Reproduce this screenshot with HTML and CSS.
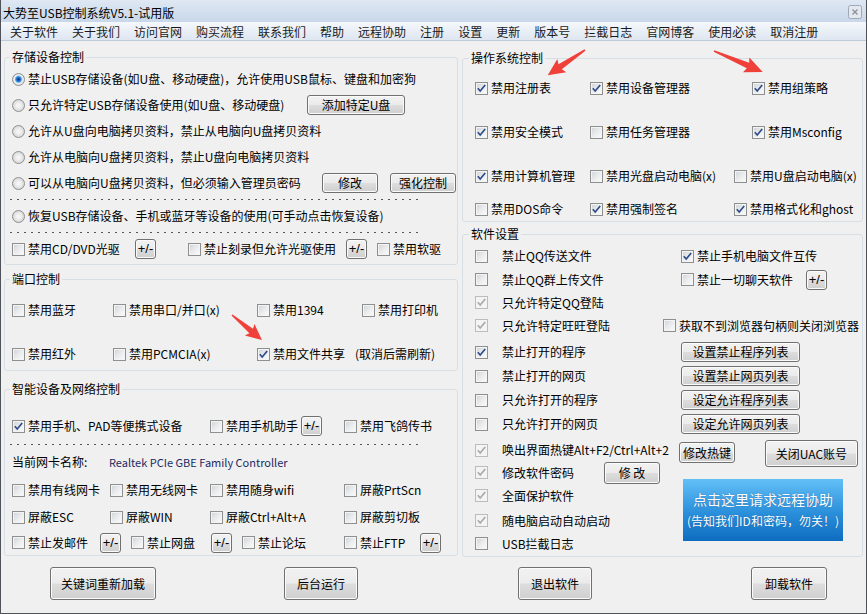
FILE: index.html
```html
<!DOCTYPE html>
<html lang="zh-CN">
<head>
  <meta charset="UTF-8" />
  <title>大势至USB控制系统V5.1-试用版</title>
  <link rel="stylesheet" href="styles.css">
</head>
<body>

<svg class="defs" width="0" height="0">
  <symbol id="chk" viewBox="0 0 11 11"><path d="M1.8 5.3 L4.2 8 L9.2 2"/></symbol>
</svg>

<div class="window">
  <div class="titlebar">
    <span class="title">大势至USB控制系统V5.1-试用版</span>
    <span class="close">
      <svg width="14" height="14" viewBox="0 0 14 14">
        <rect x="0.5" y="0.5" width="13" height="13" rx="2" fill="#e4e9f0" stroke="#9ea8b6"/>
        <path d="M4.5 4.5 L9.5 9.5 M9.5 4.5 L4.5 9.5" stroke="#8d939b" stroke-width="1.4"/>
      </svg>
    </span>
  </div>

  <div class="menubar">
    <span class="menu">关于软件</span>
    <span class="menu">关于我们</span>
    <span class="menu">访问官网</span>
    <span class="menu">购买流程</span>
    <span class="menu">联系我们</span>
    <span class="menu">帮助</span>
    <span class="menu">远程协助</span>
    <span class="menu">注册</span>
    <span class="menu">设置</span>
    <span class="menu">更新</span>
    <span class="menu">版本号</span>
    <span class="menu">拦截日志</span>
    <span class="menu">官网博客</span>
    <span class="menu">使用必读</span>
    <span class="menu">取消注册</span>
  </div>

  <div class="main">
    <div class="col col-left">

      <fieldset class="group g-storage">
        <legend>存储设备控制</legend>
        <div class="row h26"><span class="radio on"></span>禁止USB存储设备(如U盘、移动硬盘)，允许使用USB鼠标、键盘和加密狗</div>
        <div class="row h26"><span class="radio"></span><span class="w279">只允许特定USB存储设备使用(如U盘、移动硬盘)</span><button class="btn b-add">添加特定U盘</button></div>
        <div class="row h26"><span class="radio"></span>允许从U盘向电脑拷贝资料，禁止从电脑向U盘拷贝资料</div>
        <div class="row h26"><span class="radio"></span>允许从电脑向U盘拷贝资料，禁止U盘向电脑拷贝资料</div>
        <div class="row h26"><span class="radio"></span><span class="w294">可以从电脑向U盘拷贝资料，但必须输入管理员密码</span><button class="btn b-mod">修改</button><button class="btn b-strong">强化控制</button></div>
        <div class="dash"></div>
        <div class="row h26"><span class="radio"></span>恢复USB存储设备、手机或蓝牙等设备的使用(可手动点击恢复设备)</div>
        <div class="dash"></div>
        <div class="row h26">
          <span class="item w123"><span class="cb"></span>禁用CD/DVD光驱</span>
          <button class="btn pm">+/-</button>
          <span class="item w158 ml32"><span class="cb"></span>禁止刻录但允许光驱使用</span>
          <button class="btn pm">+/-</button>
          <span class="item ml10"><span class="cb"></span>禁用软驱</span>
        </div>
      </fieldset>

      <fieldset class="group g-port">
        <legend>端口控制</legend>
        <div class="row h26">
          <span class="item w101"><span class="cb"></span>禁用蓝牙</span>
          <span class="item w144"><span class="cb"></span>禁用串口/并口(x)</span>
          <span class="item w105"><span class="cb"></span>禁用1394</span>
          <span class="item"><span class="cb"></span>禁用打印机</span>
        </div>
        <div class="row h26 mt18">
          <span class="item w101"><span class="cb"></span>禁用红外</span>
          <span class="item w144"><span class="cb"></span>禁用PCMCIA(x)</span>
          <span class="item w98"><span class="cb"><svg class="tick"><use href="#chk"/></svg></span>禁用文件共享</span>
          <span>(取消后需刷新)</span>
        </div>
      </fieldset>

      <fieldset class="group g-smart">
        <legend>智能设备及网络控制</legend>
        <div class="row h26">
          <span class="item w198"><span class="cb"><svg class="tick"><use href="#chk"/></svg></span>禁用手机、PAD等便携式设备</span>
          <span class="item w91"><span class="cb"></span>禁用手机助手</span>
          <button class="btn pm">+/-</button>
          <span class="item ml22"><span class="cb"></span>禁用飞鸽传书</span>
        </div>
        <div class="dash dash-net"></div>
        <div class="row h25">
          <span class="w97">当前网卡名称:</span>
          <span class="nic">Realtek PCIe GBE Family Controller</span>
        </div>
        <div class="row h28 mt2">
          <span class="item w98"><span class="cb"></span>禁用有线网卡</span>
          <span class="item w100"><span class="cb"></span>禁用无线网卡</span>
          <span class="item w134"><span class="cb"></span>禁用随身wifi</span>
          <span class="item"><span class="cb"></span>屏蔽PrtScn</span>
        </div>
        <div class="row h26">
          <span class="item w98"><span class="cb"></span>屏蔽ESC</span>
          <span class="item w100"><span class="cb"></span>屏蔽WIN</span>
          <span class="item w134"><span class="cb"></span>屏蔽Ctrl+Alt+A</span>
          <span class="item"><span class="cb"></span>屏蔽剪切板</span>
        </div>
        <div class="row h25">
          <span class="item w88"><span class="cb"></span>禁止发邮件</span>
          <button class="btn pm">+/-</button>
          <span class="item w80 ml10"><span class="cb"></span>禁止网盘</span>
          <button class="btn pm">+/-</button>
          <span class="item w102 ml10"><span class="cb"></span>禁止论坛</span>
          <span class="item w76"><span class="cb"></span>禁止FTP</span>
          <button class="btn pm">+/-</button>
        </div>
      </fieldset>
    </div>

    <div class="col col-right">
      <fieldset class="group g-os">
        <legend>操作系统控制</legend>
        <div class="row h26">
          <span class="item w115"><span class="cb"><svg class="tick"><use href="#chk"/></svg></span>禁用注册表</span>
          <span class="item w162"><span class="cb"><svg class="tick"><use href="#chk"/></svg></span>禁用设备管理器</span>
          <span class="item"><span class="cb"><svg class="tick"><use href="#chk"/></svg></span>禁用组策略</span>
        </div>
        <div class="row h26 mt18">
          <span class="item w115"><span class="cb"><svg class="tick"><use href="#chk"/></svg></span>禁用安全模式</span>
          <span class="item w162"><span class="cb"></span>禁用任务管理器</span>
          <span class="item"><span class="cb"><svg class="tick"><use href="#chk"/></svg></span>禁用Msconfig</span>
        </div>
        <div class="row h26 mt18">
          <span class="item w115"><span class="cb"><svg class="tick"><use href="#chk"/></svg></span>禁用计算机管理</span>
          <span class="item w144"><span class="cb"></span>禁用光盘启动电脑(x)</span>
          <span class="item"><span class="cb"></span>禁用U盘启动电脑(x)</span>
        </div>
        <div class="row h22 mt9">
          <span class="item w115"><span class="cb"></span>禁用DOS命令</span>
          <span class="item w144"><span class="cb"><svg class="tick"><use href="#chk"/></svg></span>禁用强制签名</span>
          <span class="item"><span class="cb"><svg class="tick"><use href="#chk"/></svg></span>禁用格式化和ghost</span>
        </div>
      </fieldset>

      <fieldset class="group g-soft">
        <legend>软件设置</legend>
        <div class="row h24"><span class="cb"></span><span class="stext w179">禁止QQ传送文件</span><span class="cb"><svg class="tick"><use href="#chk"/></svg></span>禁止手机电脑文件互传</div>
        <div class="row h23"><span class="cb"></span><span class="stext w179">禁止QQ群上传文件</span><span class="cb"></span><span class="w109">禁止一切聊天软件</span><button class="btn pm">+/-</button></div>
        <div class="row h23"><span class="cb dis"><svg class="tick"><use href="#chk"/></svg></span><span class="stext">只允许特定QQ登陆</span></div>
        <div class="row h23"><span class="cb dis"><svg class="tick"><use href="#chk"/></svg></span><span class="stext w161">只允许特定旺旺登陆</span><span class="cb"></span>获取不到浏览器句柄则关闭浏览器</div>
        <div class="row h24 mt3"><span class="cb"><svg class="tick"><use href="#chk"/></svg></span><span class="stext w179">禁止打开的程序</span><button class="btn list">设置禁止程序列表</button></div>
        <div class="row h24"><span class="cb"></span><span class="stext w179">禁止打开的网页</span><button class="btn list">设置禁止网页列表</button></div>
        <div class="row h24"><span class="cb"></span><span class="stext w179">只允许打开的程序</span><button class="btn list">设定允许程序列表</button></div>
        <div class="row h24"><span class="cb"></span><span class="stext w179">只允许打开的网页</span><button class="btn list">设定允许网页列表</button></div>

        <div class="lower">
          <div class="lower-left">
            <div class="row h22 mt3"><span class="cb dis"><svg class="tick"><use href="#chk"/></svg></span><span class="stext">唤出界面热键Alt+F2/Ctrl+Alt+2</span></div>
            <div class="row h23"><span class="cb dis"><svg class="tick"><use href="#chk"/></svg></span><span class="stext w102">修改软件密码</span><button class="btn b-pwd">修 改</button></div>
            <div class="row h23"><span class="cb dis"><svg class="tick"><use href="#chk"/></svg></span><span class="stext">全面保护软件</span></div>
            <div class="row h27"><span class="cb dis"><svg class="tick"><use href="#chk"/></svg></span><span class="stext">随电脑启动自动启动</span></div>
            <div class="row h19"><span class="cb"></span><span class="stext">USB拦截日志</span></div>
          </div>
          <div class="lower-right">
            <div class="hotrow">
              <button class="btn b-hot">修改热键</button>
              <button class="btn b-uac">关闭UAC账号</button>
            </div>
            <button class="remote">
              <span class="remote-1">点击这里请求远程协助</span>
              <span class="remote-2">(告知我们ID和密码，勿关！)</span>
            </button>
          </div>
        </div>
      </fieldset>
    </div>
  </div>

  <div class="footer">
    <button class="btn fbtn f1">关键词重新加载</button>
    <button class="btn fbtn f2">后台运行</button>
    <button class="btn fbtn f3">退出软件</button>
    <button class="btn fbtn f4">卸载软件</button>
  </div>

  <!-- red annotation arrows -->
  <svg class="marks" width="867" height="614" viewBox="0 0 867 614">
    <path transform="translate(232,315) rotate(39.8)" d="M0 -0.8 L25 -2.8 L23 -7.5 L39 0 L23 7.5 L25 2.8 L0 0.8 Z"/>
    <path transform="translate(585,50) rotate(145.9)" d="M0 -0.8 L30 -3 L28 -8 L45 0 L28 8 L30 3 L0 0.8 Z"/>
    <path transform="translate(714,51) rotate(23.2)" d="M0 -0.8 L37 -3 L35 -8 L53 0 L35 8 L37 3 L0 0.8 Z"/>
  </svg>
</div>

</body>
</html>
```

FILE: styles.css
```css
* {
  box-sizing: border-box;
}
body {
  margin: 0;
  font: 12px/16px "Noto Sans CJK SC", sans-serif;
  color: #000;
  background: #f0f0f0;
}
.defs {
  position: absolute;
}
.window {
  position: relative;
  width: 867px;
  height: 614px;
  border: 1px solid #4f5359;
  border-top: none;
  background: #f0f0f0;
  display: flex;
  flex-direction: column;
}

/* title + menu */
.titlebar {
  height: 22px;
  display: flex;
  padding: 5px 4px 0 2px;
  background: linear-gradient(#dfe8f3, #c8d7ea);
}
.close {
  margin-left: auto;
  height: 14px;
}
.close svg {
  display: block;
}
.menubar {
  height: 19px;
  display: flex;
  padding: 2px 0 0 2px;
  background: linear-gradient(#f5f8fc, #dee6f1);
  border-bottom: 1px solid #bccada;
}
.menu {
  padding: 0 7px;
  color: #1a1a1a;
}

/* columns */
.main {
  display: flex;
  gap: 4px;
  padding: 9px 3px 0;
}
.col {
  display: flex;
  flex-direction: column;
}
.col-left {
  width: 454px;
}
.col-right {
  width: 401px;
}

.group {
  margin: 0;
  min-width: 0;
  border: 1px solid #d5dfe5;
  border-radius: 3px;
}
.group legend {
  padding: 0 2px;
  margin-left: -2px;
  line-height: 14px;
}
.g-storage { padding: 2px 0 2px 7px; }
.g-port { padding: 11px 0 3px 7px; margin-top: 7px; }
.g-smart { padding: 17px 0 0 7px; margin-top: 11px; }
.g-os { padding: 10px 0 1px 12px; margin-top: 1px; }
.g-soft { padding: 3px 0 3px 12px; margin-top: 5px; }
.g-os legend, .g-soft legend {
  margin-left: -6px;
}

.row {
  display: flex;
  align-items: center;
  white-space: nowrap;
}
.item {
  display: flex;
  align-items: center;
  flex: none;
}
.h19 { height: 19px; }
.h22 { height: 22px; }
.h23 { height: 23px; }
.h24 { height: 24px; }
.h25 { height: 25px; }
.h26 { height: 26px; }
.h27 { height: 27px; }
.h28 { height: 28px; }
.mt2 { margin-top: 2px; }
.mt3 { margin-top: 3px; }
.mt9 { margin-top: 9px; }
.mt18 { margin-top: 18px; }
.ml10 { margin-left: 10px; }
.ml22 { margin-left: 22px; }
.ml32 { margin-left: 32px; }
.w76 { width: 76px; }
.w80 { width: 80px; }
.w88 { width: 88px; }
.w91 { width: 91px; }
.w97 { width: 97px; }
.w98 { width: 98px; }
.w100 { width: 100px; }
.w101 { width: 101px; }
.w102 { width: 102px; }
.w105 { width: 105px; }
.w109 { width: 109px; flex: none; }
.w115 { width: 115px; }
.w123 { width: 123px; }
.w134 { width: 134px; }
.w144 { width: 144px; }
.w158 { width: 158px; }
.w161 { width: 161px; }
.w162 { width: 162px; }
.w179 { width: 179px; }
.w198 { width: 198px; }
.w279 { width: 279px; flex: none; }
.w294 { width: 294px; flex: none; }

.dash {
  height: 1px;
  width: 412px;
  margin: 3px 0 3px -2px;
  background: repeating-linear-gradient(to right, #555 0 2px, transparent 2px 7px);
}
.dash-net {
  margin: 5px 0 4px -2px;
}
.nic {
  font-size: 11px;
  color: #1b2a62;
}

/* check boxes & radios */
.cb {
  width: 13px;
  height: 13px;
  flex: none;
  margin-right: 3px;
  border: 1px solid #8e8f8f;
  background: linear-gradient(135deg, #cfd2d6 0%, #e9ebed 50%, #fcfcfc 100%);
  box-shadow: inset 0 0 0 1px #f4f4f4;
}
.cb.dis {
  border-color: #bcbcbc;
  background: #f4f4f4;
}
.tick {
  display: block;
  width: 11px;
  height: 11px;
  fill: none;
  stroke: #2e4c8a;
  stroke-width: 1.7;
}
.cb.dis .tick {
  stroke: #a9a9a9;
}
.radio {
  width: 13px;
  height: 13px;
  flex: none;
  margin-right: 3px;
  border-radius: 50%;
  border: 1px solid #8e8f8f;
  background: radial-gradient(circle at 50% 50%, #f6f6f6 0, #f2f2f2 2px, #d6d6d6 6px);
}
.radio.on {
  background: radial-gradient(circle at 50% 48%, #0b2f6c 0, #1a63c0 1.6px, #3f8fe0 2.6px, #8cc6f2 3.4px, #f3f3f3 4.2px, #d6d6d6 6px);
}

.stext {
  margin-left: 11px;
  flex: none;
}

/* buttons */
.btn {
  font: 12px/16px "Noto Sans CJK SC", sans-serif;
  color: #000;
  padding: 0;
  height: 20px;
  flex: none;
  border: 1px solid #707070;
  border-radius: 3px;
  background: linear-gradient(#f2f2f2 0%, #ebebeb 48%, #dddddd 52%, #cfcfcf 100%);
  box-shadow: inset 0 0 0 1px #fbfbfb;
}
.pm {
  width: 21px;
  font: 13px/16px "Liberation Sans", sans-serif;
}
.b-add { width: 98px; height: 20px; }
.b-mod { width: 56px; }
.b-strong { width: 66px; margin-left: 12px; }
.list { width: 119px; }
.b-pwd { width: 56px; height: 22px; }
.b-hot { width: 56px; height: 21px; margin-top: 2px; }
.b-uac { width: 93px; height: 27px; margin-left: 30px; }

.lower {
  display: flex;
}
.lower-left {
  width: 204px;
  flex: none;
}
.lower-right {
  display: flex;
  flex-direction: column;
  align-items: flex-start;
}
.hotrow {
  display: flex;
  align-items: flex-start;
  margin-top: 4px;
  height: 27px;
}
.remote {
  margin: 12px 0 0 4px;
  width: 160px;
  height: 62px;
  padding: 0;
  border: none;
  color: #fff;
  font-family: "Noto Sans CJK SC", sans-serif;
  background: linear-gradient(#63bff6, #2a8fdb 55%, #0e6cbf);
  display: flex;
  flex-direction: column;
  align-items: center;
  justify-content: center;
  text-shadow: 0 0 1px rgba(0, 40, 90, 0.5);
}
.remote-1 {
  font-size: 14px;
  line-height: 20px;
}
.remote-2 {
  font-size: 12px;
  line-height: 20px;
  margin-top: 2px;
}

/* footer */
.footer {
  display: flex;
  padding-top: 10px;
}
.fbtn {
  height: 33px;
}
.f1 { width: 106px; margin-left: 49px; }
.f2 { width: 74px; margin-left: 128px; }
.f3 { width: 74px; margin-left: 160px; }
.f4 { width: 76px; margin-left: 159px; }

.marks {
  position: absolute;
  left: -1px;
  top: 0;
  pointer-events: none;
}
.marks path {
  fill: #f0403a;
}
```
